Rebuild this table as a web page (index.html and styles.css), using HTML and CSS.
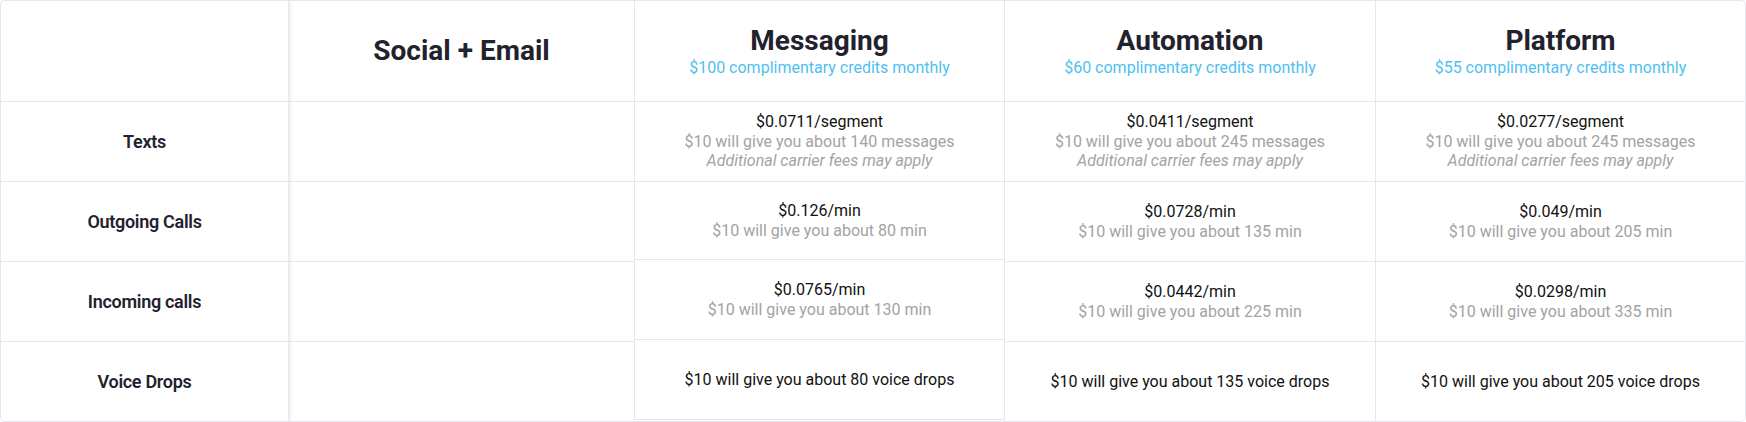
FILE: index.html
```html
<!DOCTYPE html>
<html lang="en">
<head>
<meta charset="utf-8">
<title>Pricing</title>
<link rel="stylesheet" href="styles.css">
</head>
<body>
<div class="table">
  <div class="col col-label">
    <div class="cell head"></div>
    <div class="cell label">Texts</div>
    <div class="cell label">Outgoing Calls</div>
    <div class="cell label">Incoming calls</div>
    <div class="cell label last">Voice Drops</div>
  </div>
  <div class="col col-social">
    <div class="cell head"><div class="title">Social + Email</div></div>
    <div class="cell"></div>
    <div class="cell"></div>
    <div class="cell"></div>
    <div class="cell last"></div>
  </div>
  <div class="col col-msg">
    <div class="cell head">
      <div class="title">Messaging</div>
      <div class="sub">$100 complimentary credits monthly</div>
    </div>
    <div class="cell">
      <div class="price">$0.0711/segment</div>
      <div class="note">$10 will give you about 140 messages</div>
      <div class="note it">Additional carrier fees may apply</div>
    </div>
    <div class="cell short">
      <div class="price">$0.126/min</div>
      <div class="note">$10 will give you about 80 min</div>
    </div>
    <div class="cell">
      <div class="price">$0.0765/min</div>
      <div class="note">$10 will give you about 130 min</div>
    </div>
    <div class="cell last">
      <div class="price">$10 will give you about 80 voice drops</div>
    </div>
  </div>
  <div class="col col-auto">
    <div class="cell head">
      <div class="title">Automation</div>
      <div class="sub">$60 complimentary credits monthly</div>
    </div>
    <div class="cell">
      <div class="price">$0.0411/segment</div>
      <div class="note">$10 will give you about 245 messages</div>
      <div class="note it">Additional carrier fees may apply</div>
    </div>
    <div class="cell">
      <div class="price">$0.0728/min</div>
      <div class="note">$10 will give you about 135 min</div>
    </div>
    <div class="cell">
      <div class="price">$0.0442/min</div>
      <div class="note">$10 will give you about 225 min</div>
    </div>
    <div class="cell last">
      <div class="price">$10 will give you about 135 voice drops</div>
    </div>
  </div>
  <div class="col col-plat">
    <div class="cell head">
      <div class="title">Platform</div>
      <div class="sub">$55 complimentary credits monthly</div>
    </div>
    <div class="cell">
      <div class="price">$0.0277/segment</div>
      <div class="note">$10 will give you about 245 messages</div>
      <div class="note it">Additional carrier fees may apply</div>
    </div>
    <div class="cell">
      <div class="price">$0.049/min</div>
      <div class="note">$10 will give you about 205 min</div>
    </div>
    <div class="cell">
      <div class="price">$0.0298/min</div>
      <div class="note">$10 will give you about 335 min</div>
    </div>
    <div class="cell last">
      <div class="price">$10 will give you about 205 voice drops</div>
    </div>
  </div>
</div>
</body>
</html>
```
FILE: styles.css
```css
* { box-sizing: border-box; }
html, body { margin: 0; padding: 0; background: #ffffff; }
body { font-family: Roboto, "Liberation Sans", sans-serif; }

.table {
  width: 1746px;
  height: 422px;
  display: flex;
  border: 1px solid #e6e6f3;
  border-radius: 5px;
  overflow: hidden;
  background: #fff;
}

.col {
  display: flex;
  flex-direction: column;
  border-right: 1px solid #e6e6f3;
  position: relative;
}
.col-label { width: 288px; z-index: 2; box-shadow: 2px 0 3px rgba(30, 30, 60, 0.07); }
.col-social { width: 346px; }
.col-msg { width: 370px; padding-bottom: 1px; }
.col-auto { width: 371px; }
.col-plat { flex: 1; border-right: none; }

.cell {
  height: 80px;
  flex: none;
  border-bottom: 1px solid #e6e6f3;
  display: flex;
  flex-direction: column;
  align-items: center;
  justify-content: center;
  text-align: center;
}
.cell.head { height: 101px; }
.cell.short { height: 78px; }
.cell.last { flex: 1; border-bottom: none; height: auto; }
.col-msg .cell.last { border-bottom: 1px solid #e6e6f3; }

.title {
  font-family: Roboto, sans-serif;
  font-weight: 700;
  font-size: 28px;
  line-height: 34px;
  color: #22222e;
}
.sub {
  font-size: 16px;
  line-height: 20px;
  color: #4fbff0;
}

.label {
  font-family: Roboto, sans-serif;
  font-weight: 600;
  font-size: 18px;
  color: #22222e;
  letter-spacing: -0.3px;
}

.price {
  font-size: 16px;
  line-height: 19.5px;
  color: #111111;
}
.note {
  font-size: 16px;
  line-height: 19.5px;
  color: #a3a3a3;
}
.note.it { font-style: italic; }
```
